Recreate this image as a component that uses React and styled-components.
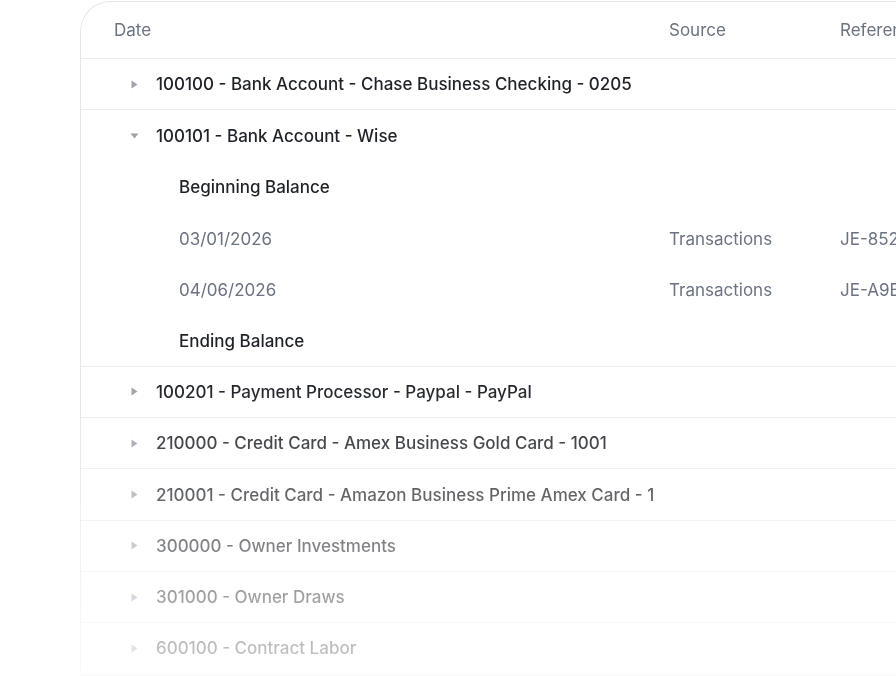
import React, { useState } from 'react';
import styled, { createGlobalStyle } from 'styled-components';

const GlobalStyle = createGlobalStyle`
  html, body {
    margin: 0;
    padding: 0;
    background: #ffffff;
    overflow: hidden;
  }
  body {
    font-family: Inter, "Noto Sans", "Liberation Sans", sans-serif;
    -webkit-font-smoothing: antialiased;
  }
`;

const Page = styled.div`
  width: 896px;
  height: 676px;
  overflow: hidden;
  padding: 1px 0 0 80px;
  box-sizing: border-box;
`;

const Card = styled.div`
  width: 1000px;
  border: 1px solid #e4e5e8;
  border-right: none;
  border-top-left-radius: 30px;
  background: #fff;
  overflow: hidden;
  -webkit-mask-image: linear-gradient(to bottom, #000 0, #000 380px, rgba(0, 0, 0, 0.22) 676px);
  mask-image: linear-gradient(to bottom, #000 0, #000 380px, rgba(0, 0, 0, 0.22) 676px);
`;

const Row = styled.div`
  display: grid;
  grid-template-columns: 572px 171px 1fr;
  align-items: center;
  box-sizing: border-box;
  height: ${p => (p.$head ? '57px' : '51.3px')};
  border-bottom: ${p => (p.$line ? '1px solid #ececef' : 'none')};
  font-size: 17px;
  line-height: 20px;
`;

const Cell = styled.div`
  padding-left: ${p => p.$pad || 16}px;
  white-space: nowrap;
  overflow: hidden;
  color: ${p => p.$color || '#6b7280'};
  font-weight: ${p => p.$weight || 400};
  display: flex;
  align-items: center;
`;

const Caret = styled.span`
  width: 24px;
  height: 20px;
  margin-right: 10px;
  display: inline-flex;
  align-items: center;
  justify-content: center;
  flex-shrink: 0;
  svg {
    display: block;
  }
`;

const CaretIcon = ({ open }) =>
  open ? (
    <svg width="9" height="6" viewBox="0 0 9 6">
      <path d="M0.5 0.5 L8.5 0.5 L4.5 5.5 Z" fill="#9ca3af" />
    </svg>
  ) : (
    <svg width="7" height="9" viewBox="0 0 7 9">
      <path d="M0.5 0.5 L6.5 4.5 L0.5 8.5 Z" fill="#9ca3af" />
    </svg>
  );

const accounts = [
  { id: 'a1', name: '100100 - Bank Account - Chase Business Checking - 0205' },
  {
    id: 'a2',
    name: '100101 - Bank Account - Wise',
    rows: [
      { date: '03/01/2026', source: 'Transactions', ref: 'JE-852C41' },
      { date: '04/06/2026', source: 'Transactions', ref: 'JE-A9B3F2' },
    ],
  },
  { id: 'a3', name: '100201 - Payment Processor - Paypal - PayPal' },
  { id: 'a4', name: '210000 - Credit Card - Amex Business Gold Card - 1001' },
  { id: 'a5', name: '210001 - Credit Card - Amazon Business Prime Amex Card - 1009' },
  { id: 'a6', name: '300000 - Owner Investments' },
  { id: 'a7', name: '301000 - Owner Draws' },
  { id: 'a8', name: '600100 - Contract Labor' },
];

const TITLE = '#1f2328';

const App = () => {
  const [open, setOpen] = useState({ a2: true });

  const toggle = id => setOpen({ ...open, [id]: !open[id] });

  return (
    <Page>
      <GlobalStyle />
      <Card>
        <Row $head $line>
          <Cell $pad={33}>Date</Cell>
          <Cell>Source</Cell>
          <Cell>Reference</Cell>
        </Row>

        {accounts.map(acc => {
          const isOpen = !!open[acc.id] && acc.rows;
          return (
            <React.Fragment key={acc.id}>
              <Row $line={!isOpen} onClick={() => toggle(acc.id)}>
                <Cell $pad={41} $color={TITLE} $weight={500}>
                  <Caret>
                    <CaretIcon open={isOpen} />
                  </Caret>
                  {acc.name}
                </Cell>
                <Cell />
                <Cell />
              </Row>
              {isOpen && (
                <>
                  <Row>
                    <Cell $pad={98} $color={TITLE} $weight={500}>
                      Beginning Balance
                    </Cell>
                    <Cell />
                    <Cell />
                  </Row>
                  {acc.rows.map(r => (
                    <Row key={r.ref}>
                      <Cell $pad={98}>{r.date}</Cell>
                      <Cell>{r.source}</Cell>
                      <Cell>{r.ref}</Cell>
                    </Row>
                  ))}
                  <Row $line>
                    <Cell $pad={98} $color={TITLE} $weight={500}>
                      Ending Balance
                    </Cell>
                    <Cell />
                    <Cell />
                  </Row>
                </>
              )}
            </React.Fragment>
          );
        })}
      </Card>
    </Page>
  );
};

export default App;
